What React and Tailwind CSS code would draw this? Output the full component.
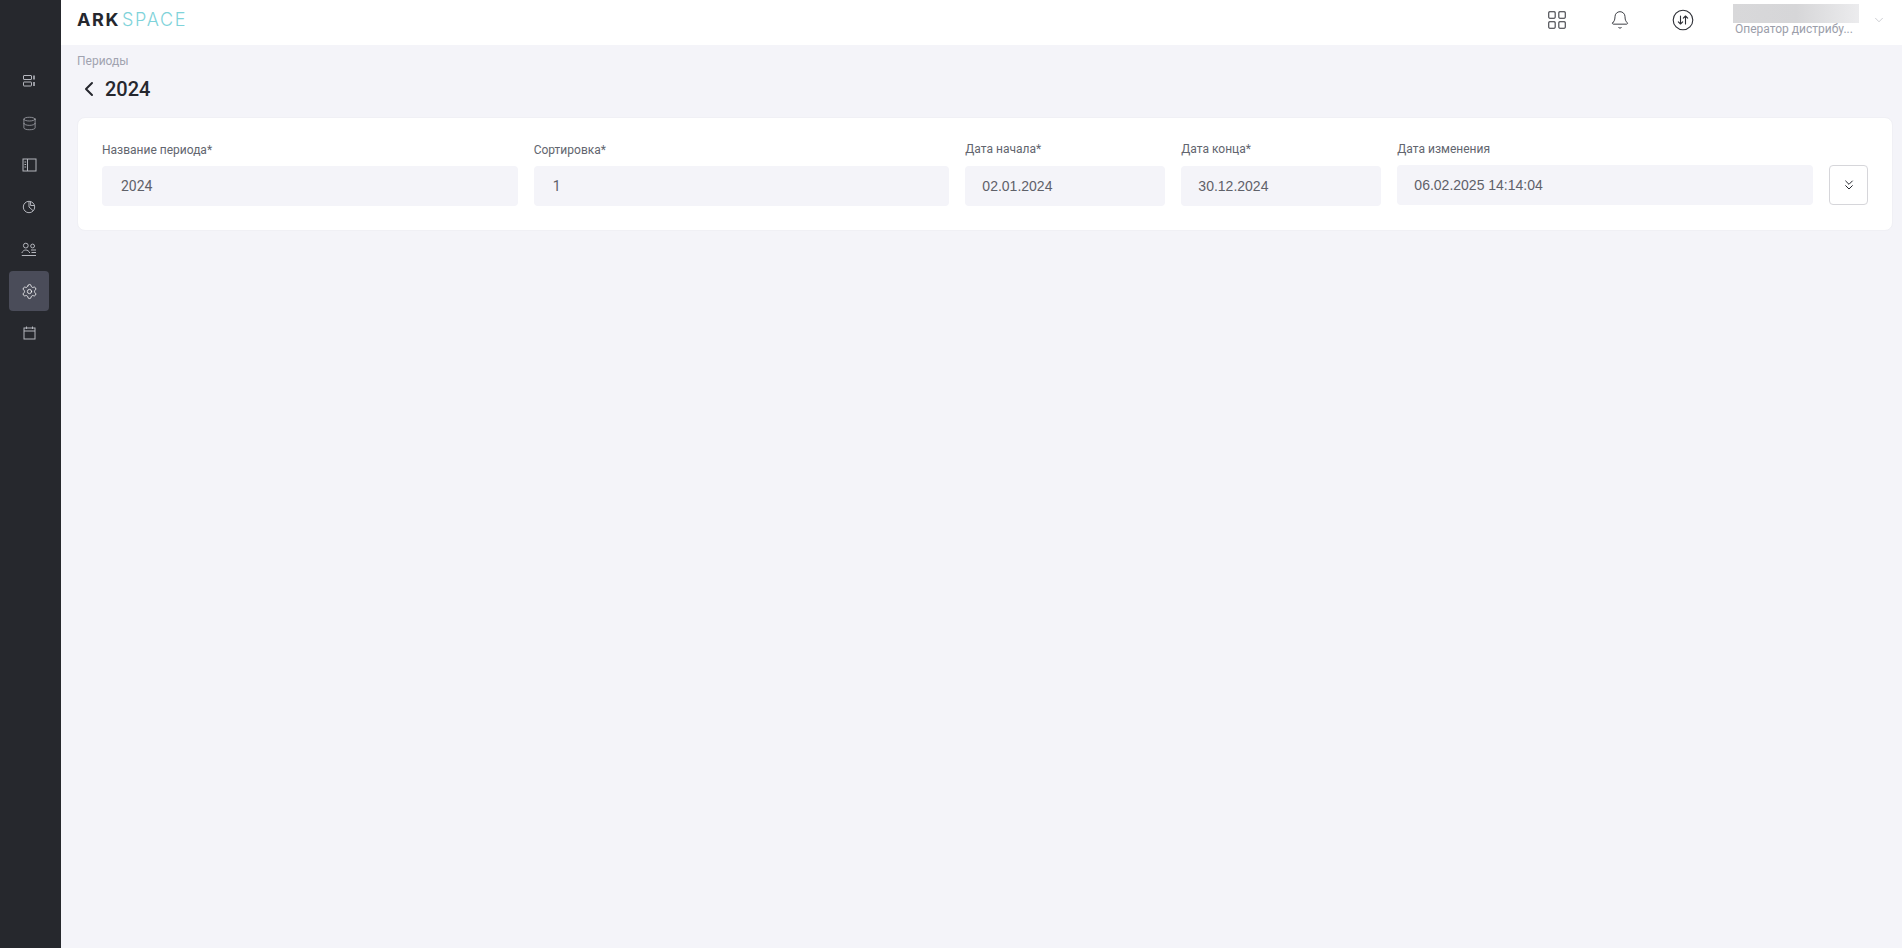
import { ChevronLeft, ChevronDown, ChevronsDown, LayoutGrid, Bell, Database, Settings } from 'lucide-react';

function IconServers() {
  return (
    <svg width="14" height="14" viewBox="0 0 14 14" fill="none" stroke="currentColor" strokeWidth="1">
      <rect x="1.5" y="1.5" width="8" height="4" rx="0.5" />
      <rect x="1.5" y="8" width="8" height="4" rx="0.5" />
      <path d="M12 1.5v4M12 8v4" strokeWidth="1.6" />
    </svg>
  );
}

function IconBook() {
  return (
    <svg width="15" height="14" viewBox="0 0 15 14" fill="none" stroke="currentColor" strokeWidth="1">
      <rect x="1" y="1" width="13" height="12" />
      <path d="M5.5 1v12M2.5 4h1.6M2.5 6.5h1.6M2.5 9h1.6" />
    </svg>
  );
}

function IconPie() {
  return (
    <svg width="14" height="14" viewBox="0 0 14 14" fill="none" stroke="currentColor" strokeWidth="1">
      <circle cx="7" cy="7" r="5.7" />
      <path d="M7 1.5V7l4 3.6" />
      <path d="M8.6 1.8v3.7h3.8" />
    </svg>
  );
}

function IconPeople() {
  return (
    <svg width="16" height="15" viewBox="0 0 16 15" fill="none" stroke="currentColor" strokeWidth="1">
      <circle cx="4.8" cy="3.6" r="2.4" />
      <circle cx="11.6" cy="4" r="1.9" />
      <path d="M.8 11c1-2.2 2.4-3 4-3s3 .8 4 3" />
      <path d="M10 8h5M10.5 10.5H15M.8 13.5H15" />
    </svg>
  );
}

function IconCalendar() {
  return (
    <svg width="13" height="14" viewBox="0 0 13 14" fill="none" stroke="currentColor" strokeWidth="1">
      <rect x="1" y="2" width="11" height="11" />
      <path d="M1 5h11M3.5 .5V3M9.5 .5V3" />
    </svg>
  );
}

function IconSwap() {
  return (
    <svg width="22" height="22" viewBox="0 0 22 22" fill="none" stroke="currentColor" strokeWidth="1.1" strokeLinecap="round" strokeLinejoin="round">
      <circle cx="11" cy="11" r="9.8" />
      <path d="M8.5 7v8M6.3 12.8l2.2 2.2 2.2-2.2" />
      <path d="M13.5 15V7M11.3 9.2L13.5 7l2.2 2.2" />
    </svg>
  );
}

const navItems = [
  { icon: <IconServers /> },
  { icon: <Database size={15} strokeWidth={1.1} /> },
  { icon: <IconBook /> },
  { icon: <IconPie /> },
  { icon: <IconPeople /> },
  { icon: <Settings size={17} strokeWidth={1.1} />, active: true },
  { icon: <IconCalendar /> },
];

function Field({ label, value, className, dense }) {
  return (
    <div className={className}>
      <div className={`text-xs leading-4 text-[#62656e] ${dense ? 'mb-[9px] -mt-[1px]' : 'mb-[8px]'}`}>{label}</div>
      <div className="h-10 bg-[#f4f4f9] rounded flex items-center text-sm text-[#5f6169]">{value}</div>
    </div>
  );
}

export default function App() {
  return (
    <div className="flex h-screen bg-[#f4f4f9] font-['Roboto',sans-serif] overflow-hidden">
      <aside className="w-[61px] shrink-0 bg-[#26282d] pt-[61px] pl-[9px] flex flex-col items-start gap-[2px] text-[#b4b6bd]">
        {navItems.map((item, i) => (
          <div
            key={i}
            className={`w-10 h-10 rounded flex items-center justify-center ${item.active ? 'bg-[#4a4c59] text-white' : ''}`}
          >
            {item.icon}
          </div>
        ))}
      </aside>

      <div className="flex-1 min-w-0">
        <header className="h-[45px] bg-white flex items-start pl-[16px] pr-[16px]">
          <div className="h-10 flex items-center font-['Inter',sans-serif] text-[18px] leading-none">
            <span className="font-bold text-[#25272e] tracking-[1.6px]">ARK</span>
            <span className="ml-[2px] font-light text-[#7fd3da] tracking-[1.7px]">SPACE</span>
          </div>
          <div className="ml-auto h-10 flex items-center text-[#2c2e35]">
            <LayoutGrid size={22} strokeWidth={1.1} />
            <Bell size={20} strokeWidth={1.1} className="ml-[42px]" />
            <div className="ml-[42px]"><IconSwap /></div>
            <div className="ml-[39px] w-[126px]">
              <div className="h-[19px] bg-gradient-to-r from-[#d8d8da] via-[#d6d6d8] to-[#ececee]"></div>
              <div className="text-xs leading-4 text-[#9b9eaa] pl-[2px] -mt-[2px] truncate">Оператор дистрибу...</div>
            </div>
            <ChevronDown size={14} strokeWidth={1} className="ml-[13px] text-[#a9abb3]" />
          </div>
        </header>

        <main className="pl-[16px] pr-[9px]">
          <div className="text-xs leading-4 text-[#a1a3b0] mt-[8px]">Периоды</div>
          <div className="flex items-center mt-[8px] h-6">
            <ChevronLeft size={24} strokeWidth={2} className="text-[#25272e]" />
            <h1 className="ml-[4px] text-xl font-medium text-[#25272e]">2024</h1>
          </div>

          <div className="mt-[16px] h-[114px] bg-white rounded-lg border border-[#f0f0f5] px-[24px] flex items-start gap-4">
            <Field className="flex-[2] mt-[24px]" label="Название периода*" value={<span className="pl-[19px]">2024</span>} />
            <Field className="flex-[2] mt-[24px]" label="Сортировка*" value={<span className="pl-[19px]">1</span>} />
            <Field className="w-[200px] shrink-0 mt-[24px]" dense label="Дата начала*" value={<span className="pl-[17px] font-['Liberation_Sans',sans-serif]">02.01.2024</span>} />
            <Field className="w-[200px] shrink-0 mt-[24px]" dense label="Дата конца*" value={<span className="pl-[17px] font-['Liberation_Sans',sans-serif]">30.12.2024</span>} />
            <Field className="flex-[2] mt-[23px]" label="Дата изменения" value={<span className="pl-[17px] font-['Liberation_Sans',sans-serif]">06.02.2025 14:14:04</span>} />
            <button className="w-[39px] h-10 shrink-0 mt-[47px] rounded border border-[#d6d6da] bg-white flex items-center justify-center text-[#25272e]">
              <ChevronsDown size={16} strokeWidth={1.5} />
            </button>
          </div>
        </main>
      </div>
    </div>
  );
}
